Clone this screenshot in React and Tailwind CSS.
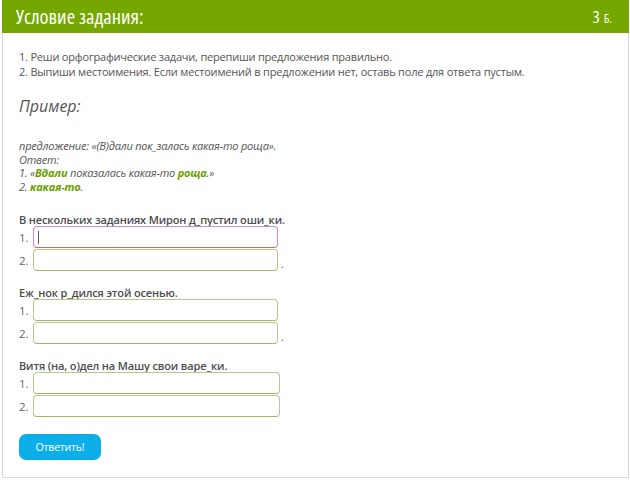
import React from "react";

function Field({ first, dot, wide }) {
  return (
    <div className="flex items-end">
      <div
        className={
          (wide ? "w-[247px] " : "w-[245px] ") +
          "h-[22px] rounded-[4px] border bg-white " +
          (first
            ? "border-[#d28ac7] border-b-[#b9765f] flex items-center pl-[4px]"
            : "border-[#b3cc8c] border-b-[#9cba6a]")
        }
      >
        {first ? <div className="w-px h-[13px] bg-[#555]" /> : null}
      </div>
      {dot ? <span className="ml-[3px] text-[11px] leading-[14px] text-[#666]">.</span> : null}
    </div>
  );
}

function Row({ n, first, dot, wide }) {
  return (
    <div className="flex items-center h-[23px]">
      <span className="w-[14px] text-[11.5px] text-[#666]">{n}.</span>
      <Field first={first} dot={dot} wide={wide} />
    </div>
  );
}

function Question({ text, dots, wide, focusFirst }) {
  return (
    <div className="flex flex-col">
      <div className="text-[11px] font-semibold tracking-[-0.15px] text-[#4d4d4d] leading-[13px]">{text}</div>
      <Row n={1} first={focusFirst} wide={wide} />
      <Row n={2} dot={dots} wide={wide} />
    </div>
  );
}

export default function App() {
  return (
    <div className="w-[630px] h-[480px] bg-white" style={{ fontFamily: '"Open Sans", "Liberation Sans", sans-serif' }}>
      <div className="mx-[2px] w-[627px] h-[478px] border-x border-b border-[#d9d9d9] flex flex-col">
        <div className="h-[33px] bg-[#74a800] flex items-center justify-between pl-[14px] pr-[17px] -mx-px font-stretch-condensed">
          <span className="text-white text-[20.5px] leading-none">Условие задания:</span>
          <span className="text-white leading-none flex items-baseline">
            <span className="text-[17px]">3</span>
            <span className="text-[12.5px] ml-[4px]">Б.</span>
          </span>
        </div>
        <div className="pl-[16px] pt-[16px] text-[#555]">
          <div className="text-[11px] tracking-[-0.2px] leading-[15px]">
            <div>1. Реши орфографические задачи, перепиши предложения правильно.</div>
            <div>2. Выпиши местоимения. Если местоимений в предложении нет, оставь поле для ответа пустым.</div>
          </div>
          <div className="mt-[15px] text-[16px] italic leading-[24px] text-[#555]">Пример:</div>
          <div className="mt-[21px] text-[11px] tracking-[-0.2px] italic leading-[13.7px] text-[#555]">
            <div>предложение: «(В)дали пок_залась какая-то роща».</div>
            <div>Ответ:</div>
            <div>
              1. «<b className="text-[#6b9f00] font-bold">Вдали</b> показалась какая-то{" "}
              <b className="text-[#6b9f00] font-bold">роща</b>.»
            </div>
            <div>
              2. <b className="text-[#6b9f00] font-bold">какая-то</b>.
            </div>
          </div>
          <div className="mt-[19px] flex flex-col gap-[14px]">
            <Question text="В нескольких заданиях Мирон д_пустил оши_ки." dots focusFirst />
            <Question text="Еж_нок р_дился этой осенью." dots />
            <Question text="Витя (на, о)дел на Машу свои варе_ки." wide />
          </div>
          <button className="mt-[16px] w-[82px] h-[26px] rounded-[7px] bg-[#0caeea] text-white text-[10.5px] tracking-[-0.2px] leading-none">
            Ответить!
          </button>
        </div>
      </div>
    </div>
  );
}
